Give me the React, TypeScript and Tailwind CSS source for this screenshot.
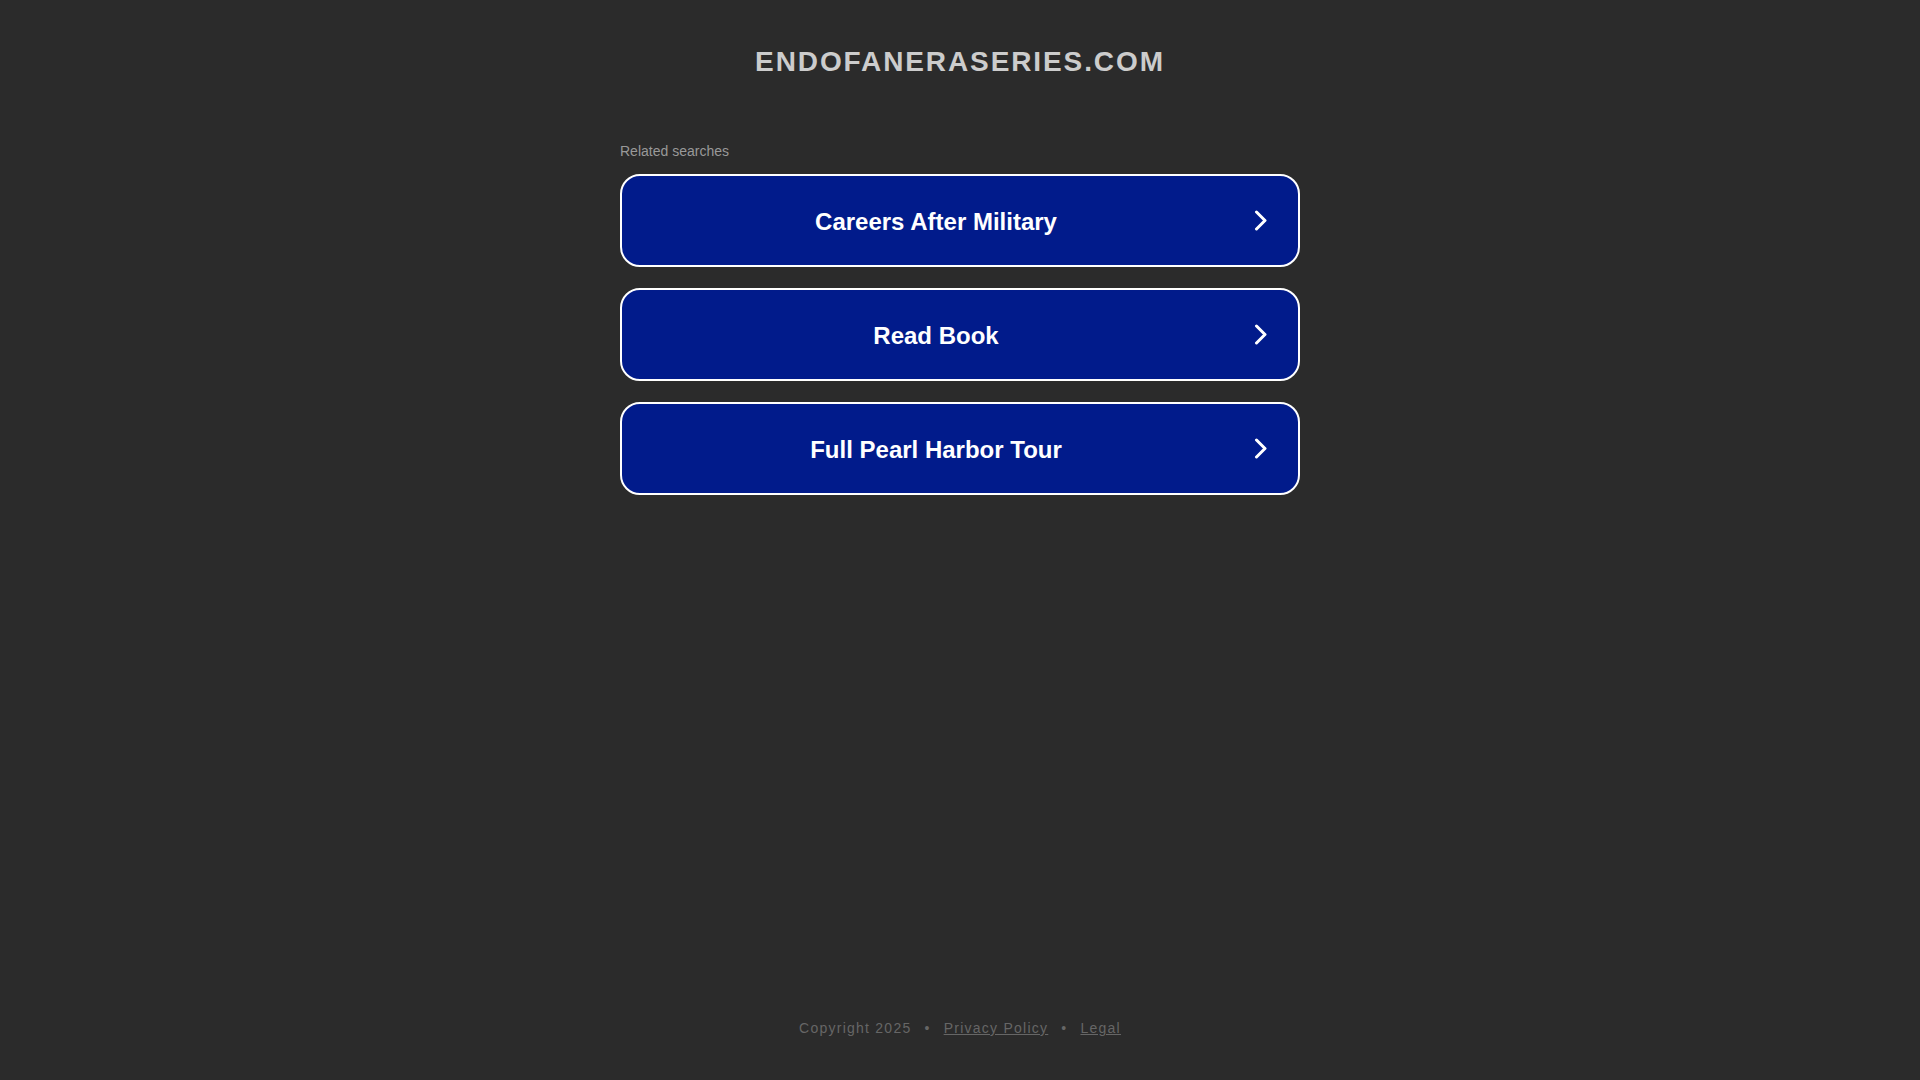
const searches = ["Careers After Military", "Read Book", "Full Pearl Harbor Tour"];

function Chevron() {
  return (
    <svg width="14" height="21" viewBox="0 0 14 21" fill="none" className="block">
      <polyline
        points="2.5,2 11,10.5 2.5,19"
        stroke="white"
        strokeWidth="3"
        strokeLinecap="round"
        strokeLinejoin="round"
      />
    </svg>
  );
}

function SearchButton({ label }: { label: string }) {
  return (
    <a
      href="#"
      className="flex h-[93px] w-[680px] items-center rounded-[20px] border-2 border-white bg-[#011b8b] text-white"
    >
      <span className="flex-1 pt-[2px] text-center text-[24px] font-bold leading-none">
        {label}
      </span>
      <span className="flex w-[22px] justify-center">
        <Chevron />
      </span>
      <span className="w-[26px]" />
    </a>
  );
}

export default function App() {
  return (
    <div
      className="flex min-h-screen flex-col items-center bg-[#2b2b2b]"
      style={{ fontFamily: '"Liberation Sans", Arial, sans-serif' }}
    >
      {/* domain title */}
      <h1 className="pt-[46px] text-[28px] font-bold leading-[32px] tracking-[1.9px] text-[#cccccc]">
        ENDOFANERASERIES.COM
      </h1>

      <div className="mt-[65px] flex w-[680px] flex-col">
        <p className="mb-[15px] text-[14px] leading-[16px] text-[#999999]">
          Related searches
        </p>
        <div className="flex flex-col gap-[21px]">
          {searches.map((s) => (
            <SearchButton key={s} label={s} />
          ))}
        </div>
      </div>

      {/* footer */}
      <div className="mt-auto flex items-center pb-[42px] text-[14px] leading-[20px] tracking-[1.25px] text-[#666666]">
        <span>Copyright 2025</span>
        <span className="mx-[13px]">•</span>
        <a href="#" className="underline">
          Privacy Policy
        </a>
        <span className="mx-[13px]">•</span>
        <a href="#" className="underline">
          Legal
        </a>
      </div>
    </div>
  );
}
